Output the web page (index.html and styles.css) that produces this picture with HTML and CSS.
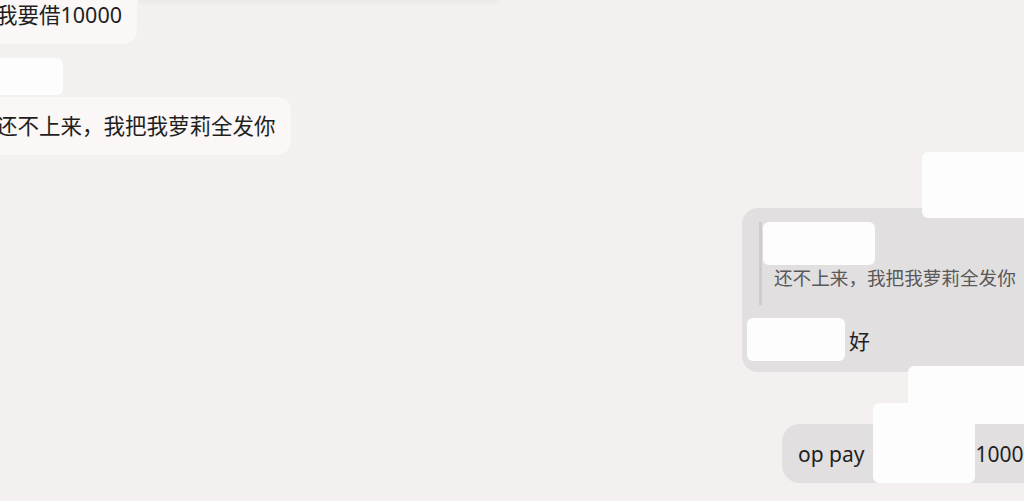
FILE: index.html
```html
<!DOCTYPE html>
<html lang="zh-CN">
<head>
<meta charset="utf-8">
<meta name="viewport" content="width=device-width, initial-scale=1">
<title>聊天记录</title>
<link rel="stylesheet" href="styles.css">
</head>
<body>

<div class="top-shade"></div>

<div class="chat">
  <div class="bubble left first">我要借10000</div>
  <div class="mask left-name"></div>
  <div class="bubble left second">还不上来，我把我萝莉全发你</div>

  <div class="mask right-name"></div>
  <div class="bubble right reply">
    <div class="quote">
      <div class="mask quote-name"></div>
      <div class="quote-text">还不上来，我把我萝莉全发你</div>
    </div>
    <div class="reply-line">
      <div class="mask reply-name"></div>
      <span>好</span>
    </div>
  </div>

  <div class="mask right-name2"></div>
  <div class="bubble right pay">
    <span>op pay</span>
    <span class="mask pay-mask"></span>
    <span>10000</span>
  </div>
</div>

</body>
</html>
```

FILE: styles.css
```css
html, body { margin: 0; height: 100%; }
body {
  background: #f3f0ef;
  font-family: "Noto Sans", "Noto Sans CJK SC", sans-serif;
  color: #1f1f1f;
  overflow: hidden;
  position: relative;
}

.top-shade {
  position: absolute;
  top: 0; left: 138px;
  width: 362px; height: 6px;
  background: linear-gradient(#ebe8e7, rgba(243,240,239,0));
  border-radius: 0 0 8px 8px;
}

.chat {
  display: flex;
  flex-direction: column;
  width: 1060px;
  margin-left: -18px;
}

.bubble {
  font-size: 21px;
  border-radius: 14px;
  box-sizing: border-box;
}
.bubble.left {
  align-self: flex-start;
  background: #faf7f6;
  height: 58px;
  line-height: 58px;
  padding: 0 15px 0 14px;
  font-size: 21.5px;
}
.first { margin-top: -14px; }
.second { margin-top: 2px; }

.mask {
  background: #fdfdfd;
  border-radius: 6px;
  position: relative;
  z-index: 1;
}
.left-name {
  align-self: flex-start;
  width: 81px; height: 37px;
  margin-top: 14px;
}

.right-name {
  align-self: flex-end;
  width: 120px; height: 66px;
  margin-top: -3px;
  margin-bottom: -10px;
}

.bubble.right {
  align-self: flex-end;
  background: #e1dfdf;
}
.reply {
  width: 300px;
  padding: 14px 0 11px 17px;
  border-radius: 16px;
}
.quote {
  border-left: 3px solid #cdcbcb;
  padding: 0 0 14px 12px;
}
.quote-name {
  width: 112px; height: 43px;
  margin-left: -11px;
}
.quote-text {
  font-size: 18.6px;
  line-height: 26px;
  color: #5a5858;
  white-space: nowrap;
}
.reply-line {
  display: flex;
  align-items: center;
  gap: 4px;
  margin: 13px 0 0 -12px;
}
.reply-name { width: 98px; height: 43px; }

.right-name2 {
  align-self: flex-end;
  width: 134px; height: 58px;
  margin-top: -6px;
}

.pay {
  display: flex;
  align-items: center;
  width: 260px;
  height: 59px;
  padding-left: 16px;
  border-radius: 18px;
  white-space: nowrap;
}
.pay-mask {
  align-self: flex-end;
  width: 102px; height: 80px;
  margin: -21px 1px 0 8px;
  flex-shrink: 0;
}
```
